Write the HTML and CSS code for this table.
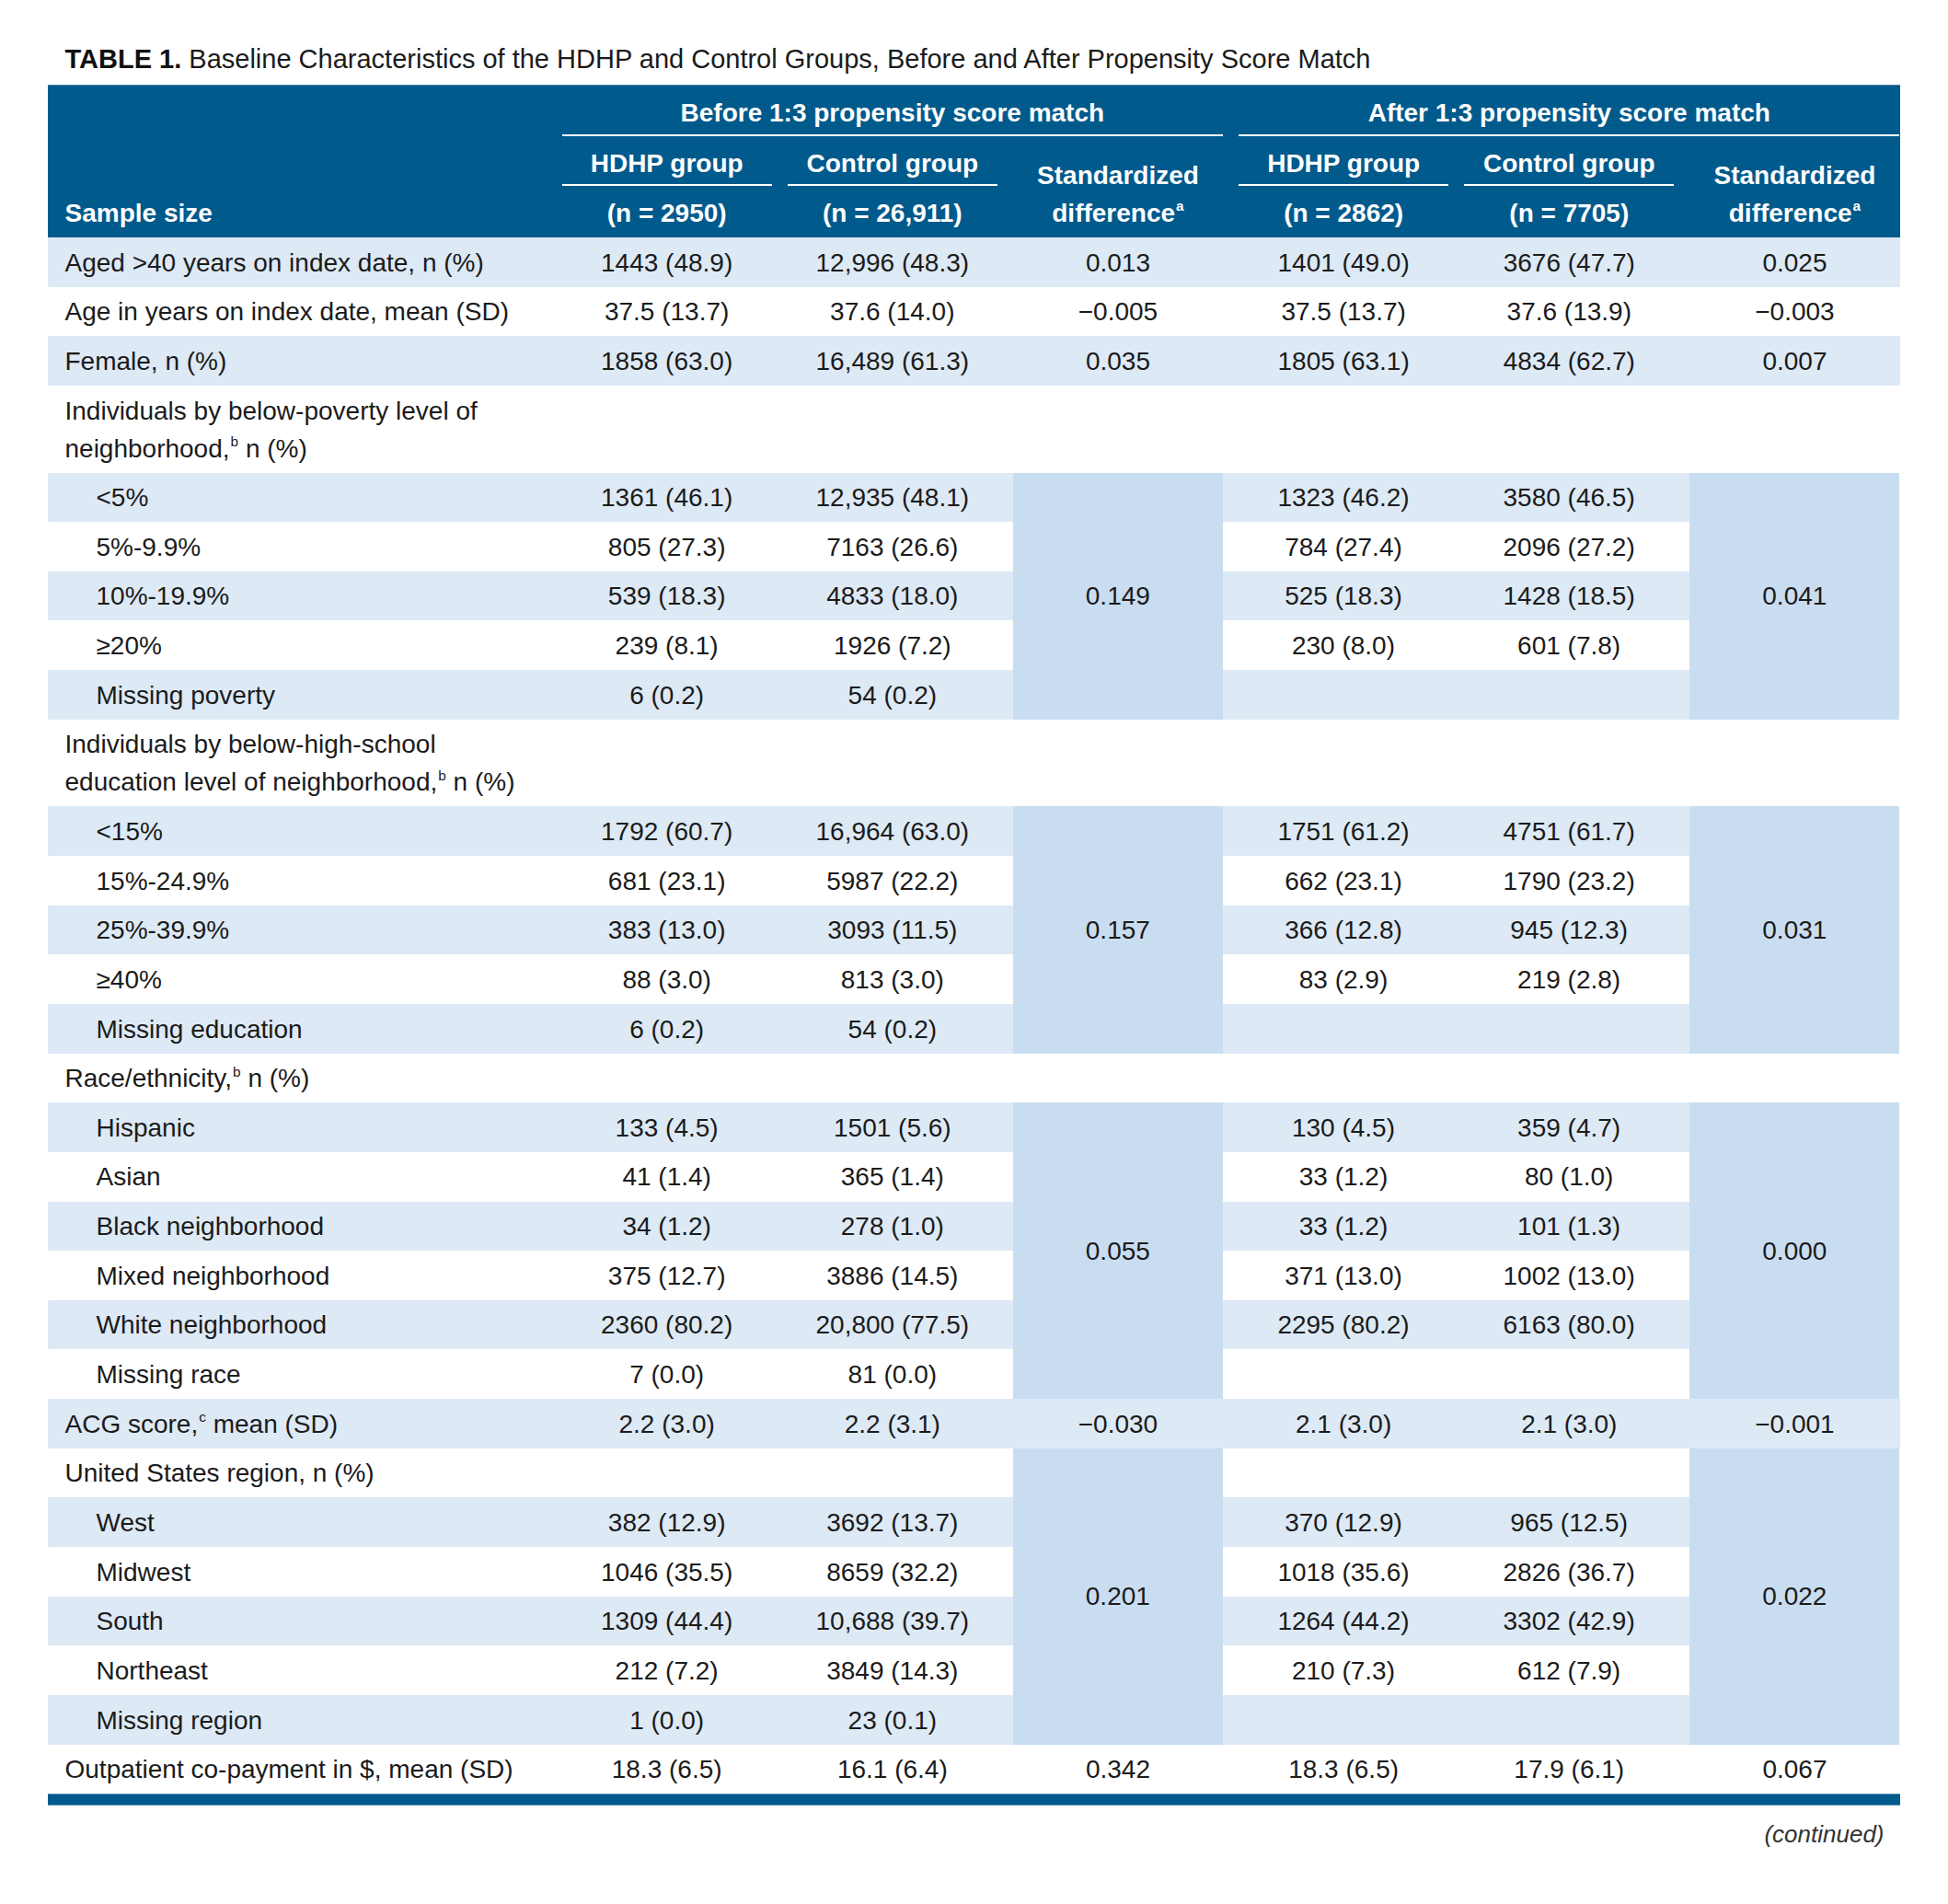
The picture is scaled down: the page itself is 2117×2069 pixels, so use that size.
FILE: index.html
```html
<!DOCTYPE html>
<html lang="en">
<head>
<meta charset="utf-8">
<title>Table 1</title>
<link rel="stylesheet" href="styles.css">
</head>
<body>
<div class="page">
  <div class="title"><b>TABLE 1.</b> Baseline Characteristics of the HDHP and Control Groups, Before and After Propensity Score Match</div>
  <div class="table">
    <div class="thead">
      <div class="th-label">Sample size</div>
      <div class="th-group">
        <div class="th-span">Before 1:3 propensity score match</div>
        <div class="th-cols">
          <div class="th-col"><div class="th-name">HDHP group</div><div class="th-n">(n = 2950)</div></div>
          <div class="th-col"><div class="th-name">Control group</div><div class="th-n">(n = 26,911)</div></div>
          <div class="th-std">Standardized<br>difference<sup>a</sup></div>
        </div>
      </div>
      <div class="th-group">
        <div class="th-span">After 1:3 propensity score match</div>
        <div class="th-cols">
          <div class="th-col"><div class="th-name">HDHP group</div><div class="th-n">(n = 2862)</div></div>
          <div class="th-col"><div class="th-name">Control group</div><div class="th-n">(n = 7705)</div></div>
          <div class="th-std">Standardized<br>difference<sup>a</sup></div>
        </div>
      </div>
    </div>

    <div class="row alt"><div class="lab">Aged &gt;40 years on index date, n (%)</div><div class="c">1443 (48.9)</div><div class="c">12,996 (48.3)</div><div class="c">0.013</div><div class="c">1401 (49.0)</div><div class="c">3676 (47.7)</div><div class="c">0.025</div></div>
    <div class="row"><div class="lab">Age in years on index date, mean (SD)</div><div class="c">37.5 (13.7)</div><div class="c">37.6 (14.0)</div><div class="c">&minus;0.005</div><div class="c">37.5 (13.7)</div><div class="c">37.6 (13.9)</div><div class="c">&minus;0.003</div></div>
    <div class="row alt"><div class="lab">Female, n (%)</div><div class="c">1858 (63.0)</div><div class="c">16,489 (61.3)</div><div class="c">0.035</div><div class="c">1805 (63.1)</div><div class="c">4834 (62.7)</div><div class="c">0.007</div></div>
    <div class="row"><div class="lab">Individuals by below-poverty level of<br>neighborhood,<sup>b</sup> n (%)</div></div>

    <div class="group">
      <div class="part-a">
        <div class="strip alt"><div class="lab sub">&lt;5%</div><div class="c">1361 (46.1)</div><div class="c">12,935 (48.1)</div></div>
        <div class="strip"><div class="lab sub">5%-9.9%</div><div class="c">805 (27.3)</div><div class="c">7163 (26.6)</div></div>
        <div class="strip alt"><div class="lab sub">10%-19.9%</div><div class="c">539 (18.3)</div><div class="c">4833 (18.0)</div></div>
        <div class="strip"><div class="lab sub">&ge;20%</div><div class="c">239 (8.1)</div><div class="c">1926 (7.2)</div></div>
        <div class="strip alt"><div class="lab sub">Missing poverty</div><div class="c">6 (0.2)</div><div class="c">54 (0.2)</div></div>
      </div>
      <div class="std">0.149</div>
      <div class="part-b">
        <div class="strip alt"><div class="c">1323 (46.2)</div><div class="c">3580 (46.5)</div></div>
        <div class="strip"><div class="c">784 (27.4)</div><div class="c">2096 (27.2)</div></div>
        <div class="strip alt"><div class="c">525 (18.3)</div><div class="c">1428 (18.5)</div></div>
        <div class="strip"><div class="c">230 (8.0)</div><div class="c">601 (7.8)</div></div>
        <div class="strip alt"><div class="c"></div><div class="c"></div></div>
      </div>
      <div class="std">0.041</div>
    </div>

    <div class="row"><div class="lab">Individuals by below-high-school<br>education level of neighborhood,<sup>b</sup> n (%)</div></div>

    <div class="group">
      <div class="part-a">
        <div class="strip alt"><div class="lab sub">&lt;15%</div><div class="c">1792 (60.7)</div><div class="c">16,964 (63.0)</div></div>
        <div class="strip"><div class="lab sub">15%-24.9%</div><div class="c">681 (23.1)</div><div class="c">5987 (22.2)</div></div>
        <div class="strip alt"><div class="lab sub">25%-39.9%</div><div class="c">383 (13.0)</div><div class="c">3093 (11.5)</div></div>
        <div class="strip"><div class="lab sub">&ge;40%</div><div class="c">88 (3.0)</div><div class="c">813 (3.0)</div></div>
        <div class="strip alt"><div class="lab sub">Missing education</div><div class="c">6 (0.2)</div><div class="c">54 (0.2)</div></div>
      </div>
      <div class="std">0.157</div>
      <div class="part-b">
        <div class="strip alt"><div class="c">1751 (61.2)</div><div class="c">4751 (61.7)</div></div>
        <div class="strip"><div class="c">662 (23.1)</div><div class="c">1790 (23.2)</div></div>
        <div class="strip alt"><div class="c">366 (12.8)</div><div class="c">945 (12.3)</div></div>
        <div class="strip"><div class="c">83 (2.9)</div><div class="c">219 (2.8)</div></div>
        <div class="strip alt"><div class="c"></div><div class="c"></div></div>
      </div>
      <div class="std">0.031</div>
    </div>

    <div class="row"><div class="lab">Race/ethnicity,<sup>b</sup> n (%)</div></div>

    <div class="group">
      <div class="part-a">
        <div class="strip alt"><div class="lab sub">Hispanic</div><div class="c">133 (4.5)</div><div class="c">1501 (5.6)</div></div>
        <div class="strip"><div class="lab sub">Asian</div><div class="c">41 (1.4)</div><div class="c">365 (1.4)</div></div>
        <div class="strip alt"><div class="lab sub">Black neighborhood</div><div class="c">34 (1.2)</div><div class="c">278 (1.0)</div></div>
        <div class="strip"><div class="lab sub">Mixed neighborhood</div><div class="c">375 (12.7)</div><div class="c">3886 (14.5)</div></div>
        <div class="strip alt"><div class="lab sub">White neighborhood</div><div class="c">2360 (80.2)</div><div class="c">20,800 (77.5)</div></div>
        <div class="strip"><div class="lab sub">Missing race</div><div class="c">7 (0.0)</div><div class="c">81 (0.0)</div></div>
      </div>
      <div class="std">0.055</div>
      <div class="part-b">
        <div class="strip alt"><div class="c">130 (4.5)</div><div class="c">359 (4.7)</div></div>
        <div class="strip"><div class="c">33 (1.2)</div><div class="c">80 (1.0)</div></div>
        <div class="strip alt"><div class="c">33 (1.2)</div><div class="c">101 (1.3)</div></div>
        <div class="strip"><div class="c">371 (13.0)</div><div class="c">1002 (13.0)</div></div>
        <div class="strip alt"><div class="c">2295 (80.2)</div><div class="c">6163 (80.0)</div></div>
        <div class="strip"><div class="c"></div><div class="c"></div></div>
      </div>
      <div class="std">0.000</div>
    </div>

    <div class="row alt"><div class="lab">ACG score,<sup>c</sup> mean (SD)</div><div class="c">2.2 (3.0)</div><div class="c">2.2 (3.1)</div><div class="c">&minus;0.030</div><div class="c">2.1 (3.0)</div><div class="c">2.1 (3.0)</div><div class="c">&minus;0.001</div></div>

    <div class="group">
      <div class="part-a">
        <div class="strip"><div class="lab">United States region, n (%)</div><div class="c"></div><div class="c"></div></div>
        <div class="strip alt"><div class="lab sub">West</div><div class="c">382 (12.9)</div><div class="c">3692 (13.7)</div></div>
        <div class="strip"><div class="lab sub">Midwest</div><div class="c">1046 (35.5)</div><div class="c">8659 (32.2)</div></div>
        <div class="strip alt"><div class="lab sub">South</div><div class="c">1309 (44.4)</div><div class="c">10,688 (39.7)</div></div>
        <div class="strip"><div class="lab sub">Northeast</div><div class="c">212 (7.2)</div><div class="c">3849 (14.3)</div></div>
        <div class="strip alt"><div class="lab sub">Missing region</div><div class="c">1 (0.0)</div><div class="c">23 (0.1)</div></div>
      </div>
      <div class="std">0.201</div>
      <div class="part-b">
        <div class="strip"><div class="c"></div><div class="c"></div></div>
        <div class="strip alt"><div class="c">370 (12.9)</div><div class="c">965 (12.5)</div></div>
        <div class="strip"><div class="c">1018 (35.6)</div><div class="c">2826 (36.7)</div></div>
        <div class="strip alt"><div class="c">1264 (44.2)</div><div class="c">3302 (42.9)</div></div>
        <div class="strip"><div class="c">210 (7.3)</div><div class="c">612 (7.9)</div></div>
        <div class="strip alt"><div class="c"></div><div class="c"></div></div>
      </div>
      <div class="std">0.022</div>
    </div>

    <div class="row"><div class="lab">Outpatient co-payment in $, mean (SD)</div><div class="c">18.3 (6.5)</div><div class="c">16.1 (6.4)</div><div class="c">0.342</div><div class="c">18.3 (6.5)</div><div class="c">17.9 (6.1)</div><div class="c">0.067</div></div>

    <div class="tfoot-bar"></div>
  </div>
  <div class="continued">(continued)</div>
</div>
</body>
</html>
```

FILE: styles.css
```css
* { box-sizing: border-box; }

html, body {
  margin: 0;
  padding: 0;
  background: #ffffff;
}

.page {
  padding: 44px 0 0 51.5px;
  font-family: "Liberation Sans", Arial, sans-serif;
  font-size: 28px;
  line-height: 41px;
  color: #1b1b1b;
}

.title {
  padding-left: 19px;
  margin-bottom: 7px;
  font-size: 29px;
}

.title b {
  font-weight: 700;
  color: #111;
}

.table {
  width: 2013px;
}

sup {
  font-size: 0.55em;
  line-height: 0;
  vertical-align: 0.75em;
  margin-left: 1px;
}

/* Header */
.thead {
  display: flex;
  column-gap: 17.17px;
  background: #005a8c;
  color: #ffffff;
  font-weight: 700;
  box-shadow: inset 0 1px 0 #4f86ad;
}

.th-label {
  width: 542px;
  flex: none;
  align-self: flex-end;
  padding: 0 0 6px 19px;
}

.th-group {
  width: 718.33px;
  flex: none;
}

.th-span {
  text-align: center;
  padding: 10px 0 2.5px;
  border-bottom: 2px solid #ffffff;
}

.th-cols {
  display: flex;
  column-gap: 17.17px;
}

.th-col {
  width: 228px;
  flex: none;
  text-align: center;
}

.th-name {
  padding: 9px 0 2.5px;
  border-bottom: 2px solid #ffffff;
}

.th-n {
  padding: 9px 0 6px;
}

.th-std {
  width: 228px;
  flex: none;
  align-self: flex-end;
  text-align: center;
  padding-bottom: 6px;
}

/* Body rows */
.row {
  display: flex;
  column-gap: 17.17px;
}

.strip {
  display: flex;
  column-gap: 17.17px;
}

.alt {
  background: #dde9f5;
}

.lab {
  width: 542px;
  flex: none;
  padding: 6.6px 0 6.05px 19px;
}

.lab.sub {
  padding-left: 53px;
}

.c {
  width: 228px;
  flex: none;
  text-align: center;
  padding: 6.6px 0 6.05px;
  min-height: 53.65px;
}

.group {
  display: flex;
}

.part-a {
  width: 1049.34px;
  flex: none;
}

.part-a .strip {
  padding-right: 17.17px;
}

.part-b {
  width: 507.5px;
  flex: none;
}

.part-b .strip {
  padding: 0 17.17px;
}

.std {
  width: 228px;
  flex: none;
  background: #c9ddf1;
  display: flex;
  align-items: center;
  justify-content: center;
}

.tfoot-bar {
  height: 13px;
  background: #005a8c;
  border-top: 1px solid #5a8fb5;
  border-bottom: 1px solid #5a8fb5;
}

.continued {
  width: 2013px;
  text-align: right;
  padding-right: 17px;
  margin-top: 11px;
  font-size: 26px;
  font-style: italic;
  color: #333;
}
```
